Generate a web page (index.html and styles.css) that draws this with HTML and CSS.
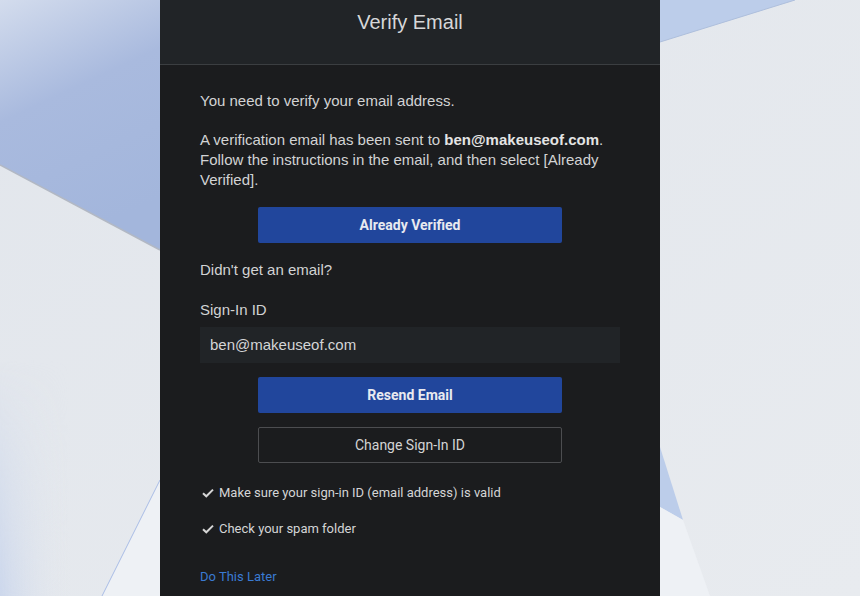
FILE: index.html
```html
<!DOCTYPE html>
<html lang="en">
<head>
<meta charset="utf-8">
<title>Verify Email</title>
<link rel="stylesheet" href="styles.css">
</head>
<body>
<svg class="backdrop" width="860" height="596" viewBox="0 0 860 596" aria-hidden="true">
  <defs>
    <linearGradient id="bgBase" x1="0" y1="0" x2="1" y2="1">
      <stop offset="0" stop-color="#e2e6ec"/>
      <stop offset="1" stop-color="#e8ebef"/>
    </linearGradient>
    <linearGradient id="blueL" x1="0" y1="0" x2="0.3" y2="1">
      <stop offset="0" stop-color="#d3dced"/>
      <stop offset="0.45" stop-color="#a9bade"/>
      <stop offset="1" stop-color="#a3b6dc"/>
    </linearGradient>
    <linearGradient id="leftGlow" x1="0" y1="0" x2="1" y2="0">
      <stop offset="0" stop-color="#ccd7ec"/>
      <stop offset="1" stop-color="#e4e8ee" stop-opacity="0"/>
    </linearGradient>
    <linearGradient id="leftGlowV" x1="0" y1="0" x2="0" y2="1">
      <stop offset="0" stop-color="#fff" stop-opacity="0"/>
      <stop offset="1" stop-color="#fff" stop-opacity="1"/>
    </linearGradient>
    <mask id="glowMask">
      <rect x="0" y="360" width="70" height="236" fill="url(#leftGlowV)"/>
    </mask>
  </defs>
  <rect width="860" height="596" fill="url(#bgBase)"/>
  <rect x="0" y="360" width="70" height="236" fill="url(#leftGlow)" mask="url(#glowMask)"/>
  <polygon points="0,0 160,0 160,250 0,165" fill="url(#blueL)"/>
  <line x1="0" y1="165" x2="160" y2="250" stroke="#b2b8c4" stroke-width="1.5"/>
  <polygon points="160,480 160,596 102,596" fill="#eef1f5"/>
  <line x1="160" y1="480" x2="102" y2="596" stroke="#a9bde6" stroke-width="1"/>
  <polygon points="660,0 795,0 660,42" fill="#bccdea"/>
  <line x1="660" y1="42" x2="795" y2="0" stroke="#aebfdc" stroke-width="1"/>
  <polygon points="660,447 683,520 660,507" fill="#bccdea"/>
  <polygon points="683,520 710,596 660,596 660,507" fill="#eef1f5"/>
</svg>

<main class="panel">
  <header class="panel-head">
    <h1 class="title">Verify Email</h1>
  </header>
  <section class="panel-body">
    <p class="text intro">You need to verify your email address.</p>
    <p class="text sent">A verification email has been sent to <strong>ben@makeuseof.com</strong>. Follow the instructions in the email, and then select [Already Verified].</p>
    <button class="btn btn-primary btn-verified" type="button">Already Verified</button>
    <p class="text didnt">Didn't get an email?</p>
    <label class="text label" for="signin">Sign-In ID</label>
    <div class="input" id="signin">ben@makeuseof.com</div>
    <button class="btn btn-primary btn-resend" type="button">Resend Email</button>
    <button class="btn btn-outline" type="button">Change Sign-In ID</button>
    <ul class="checks">
      <li class="check"><svg class="tick" width="12" height="10" viewBox="0 0 12 10"><path d="M1 5.2 L4.3 8.3 L11 1.6" fill="none" stroke="#d6d6d6" stroke-width="2"/></svg><span>Make sure your sign-in ID (email address) is valid</span></li>
      <li class="check"><svg class="tick" width="12" height="10" viewBox="0 0 12 10"><path d="M1 5.2 L4.3 8.3 L11 1.6" fill="none" stroke="#d6d6d6" stroke-width="2"/></svg><span>Check your spam folder</span></li>
    </ul>
    <a class="later" href="#">Do This Later</a>
  </section>
</main>
</body>
</html>
```
FILE: styles.css
```css
html, body {
  margin: 0;
  padding: 0;
  height: 100%;
  overflow: hidden;
}
body {
  background: #e6e9ee;
  font-family: "Liberation Sans", Arial, sans-serif;
  position: relative;
}
.backdrop {
  position: absolute;
  left: 0;
  top: 0;
  display: block;
}
.panel {
  position: relative;
  width: 500px;
  min-height: 596px;
  margin: 0 0 0 160px;
  background: #1b1c1e;
}
.panel-head {
  height: 64px;
  background: #212427;
  border-bottom: 1px solid #3b3e41;
  display: flex;
  justify-content: center;
}
.title {
  margin: 0;
  padding-top: 10px;
  font-weight: normal;
  font-size: 20px;
  line-height: 24px;
  color: #d6d7d8;
}
.panel-body {
  padding: 26px 40px 0;
  display: flex;
  flex-direction: column;
}
.text {
  margin: 0;
  font-size: 15px;
  line-height: 20px;
  color: #d2d3d4;
}
.text strong {
  color: #e4e4e4;
}
.sent {
  margin-top: 19px;
}
.btn {
  align-self: center;
  width: 304px;
  height: 36px;
  border-radius: 2px;
  font-family: Roboto, "Liberation Sans", sans-serif;
  font-size: 14px;
  cursor: pointer;
  padding: 0;
}
.btn-primary {
  background: #21469c;
  border: none;
  color: #e8eaf0;
  font-weight: 700;
}
.btn-outline {
  background: transparent;
  border: 1px solid #4c4d50;
  color: #d4d4d4;
  margin-top: 14px;
}
.btn-verified {
  margin-top: 17px;
}
.didnt {
  margin-top: 17px;
}
.label {
  margin-top: 20px;
}
.input {
  margin-top: 7px;
  height: 36px;
  background: #212427;
  color: #d4d5d6;
  font-size: 15px;
  line-height: 36px;
  padding: 0 10px;
}
.btn-resend {
  margin-top: 14px;
}
.checks {
  list-style: none;
  margin: 20px 0 0;
  padding: 0;
  display: flex;
  flex-direction: column;
  gap: 16px;
}
.check {
  display: flex;
  align-items: center;
  gap: 5px;
  padding-left: 2px;
  font-family: Roboto, "Liberation Sans", sans-serif;
  font-size: 13px;
  line-height: 20px;
  color: #d4d5d6;
}
.later {
  margin-top: 28px;
  align-self: flex-start;
  font-family: Roboto, "Liberation Sans", sans-serif;
  font-size: 13px;
  line-height: 20px;
  color: #3a7ad2;
  text-decoration: none;
}
```
